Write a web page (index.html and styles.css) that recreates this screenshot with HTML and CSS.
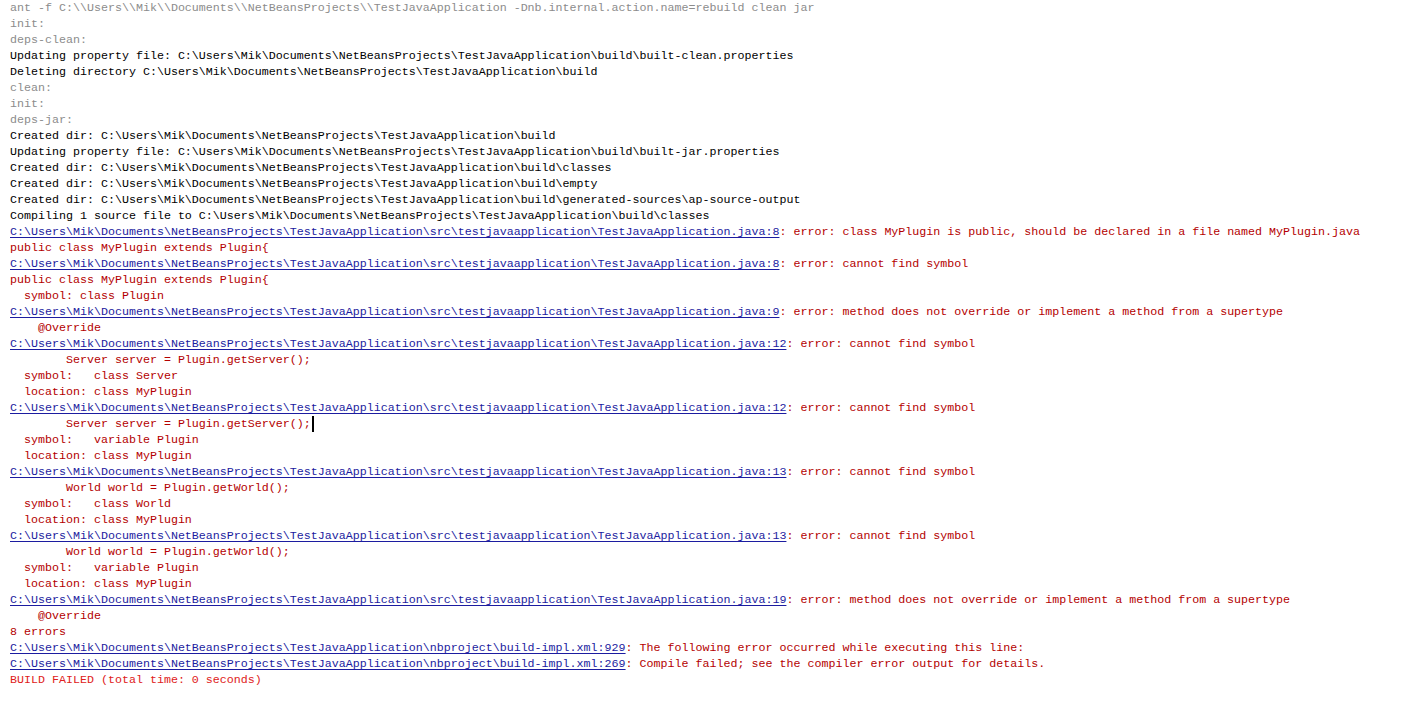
FILE: index.html
```html
<!DOCTYPE html>
<html lang="en">
	<head>
		<meta charset="utf-8" />
		<title>Output - TestJavaApplication (clean,jar)</title>
		<link rel="stylesheet" href="styles.css">
	</head>
	<body>
		<div id="output">
<div class="line info">ant -f C:\\Users\\Mik\\Documents\\NetBeansProjects\\TestJavaApplication -Dnb.internal.action.name=rebuild clean jar</div>
<div class="line info">init:</div>
<div class="line info">deps-clean:</div>
<div class="line">Updating property file: C:\Users\Mik\Documents\NetBeansProjects\TestJavaApplication\build\built-clean.properties</div>
<div class="line">Deleting directory C:\Users\Mik\Documents\NetBeansProjects\TestJavaApplication\build</div>
<div class="line info">clean:</div>
<div class="line info">init:</div>
<div class="line info">deps-jar:</div>
<div class="line">Created dir: C:\Users\Mik\Documents\NetBeansProjects\TestJavaApplication\build</div>
<div class="line">Updating property file: C:\Users\Mik\Documents\NetBeansProjects\TestJavaApplication\build\built-jar.properties</div>
<div class="line">Created dir: C:\Users\Mik\Documents\NetBeansProjects\TestJavaApplication\build\classes</div>
<div class="line">Created dir: C:\Users\Mik\Documents\NetBeansProjects\TestJavaApplication\build\empty</div>
<div class="line">Created dir: C:\Users\Mik\Documents\NetBeansProjects\TestJavaApplication\build\generated-sources\ap-source-output</div>
<div class="line">Compiling 1 source file to C:\Users\Mik\Documents\NetBeansProjects\TestJavaApplication\build\classes</div>
<div class="line err"><a href="#">C:\Users\Mik\Documents\NetBeansProjects\TestJavaApplication\src\testjavaapplication\TestJavaApplication.java:8</a>: error: class MyPlugin is public, should be declared in a file named MyPlugin.java</div>
<div class="line err">public class MyPlugin extends Plugin{</div>
<div class="line err"><a href="#">C:\Users\Mik\Documents\NetBeansProjects\TestJavaApplication\src\testjavaapplication\TestJavaApplication.java:8</a>: error: cannot find symbol</div>
<div class="line err">public class MyPlugin extends Plugin{</div>
<div class="line err">  symbol: class Plugin</div>
<div class="line err"><a href="#">C:\Users\Mik\Documents\NetBeansProjects\TestJavaApplication\src\testjavaapplication\TestJavaApplication.java:9</a>: error: method does not override or implement a method from a supertype</div>
<div class="line err">    @Override</div>
<div class="line err"><a href="#">C:\Users\Mik\Documents\NetBeansProjects\TestJavaApplication\src\testjavaapplication\TestJavaApplication.java:12</a>: error: cannot find symbol</div>
<div class="line err">        Server server = Plugin.getServer();</div>
<div class="line err">  symbol:   class Server</div>
<div class="line err">  location: class MyPlugin</div>
<div class="line err"><a href="#">C:\Users\Mik\Documents\NetBeansProjects\TestJavaApplication\src\testjavaapplication\TestJavaApplication.java:12</a>: error: cannot find symbol</div>
<div class="line err">        Server server = Plugin.getServer();<span class="caret"></span></div>
<div class="line err">  symbol:   variable Plugin</div>
<div class="line err">  location: class MyPlugin</div>
<div class="line err"><a href="#">C:\Users\Mik\Documents\NetBeansProjects\TestJavaApplication\src\testjavaapplication\TestJavaApplication.java:13</a>: error: cannot find symbol</div>
<div class="line err">        World world = Plugin.getWorld();</div>
<div class="line err">  symbol:   class World</div>
<div class="line err">  location: class MyPlugin</div>
<div class="line err"><a href="#">C:\Users\Mik\Documents\NetBeansProjects\TestJavaApplication\src\testjavaapplication\TestJavaApplication.java:13</a>: error: cannot find symbol</div>
<div class="line err">        World world = Plugin.getWorld();</div>
<div class="line err">  symbol:   variable Plugin</div>
<div class="line err">  location: class MyPlugin</div>
<div class="line err"><a href="#">C:\Users\Mik\Documents\NetBeansProjects\TestJavaApplication\src\testjavaapplication\TestJavaApplication.java:19</a>: error: method does not override or implement a method from a supertype</div>
<div class="line err">    @Override</div>
<div class="line err">8 errors</div>
<div class="line err"><a href="#">C:\Users\Mik\Documents\NetBeansProjects\TestJavaApplication\nbproject\build-impl.xml:929</a>: The following error occurred while executing this line:</div>
<div class="line err"><a href="#">C:\Users\Mik\Documents\NetBeansProjects\TestJavaApplication\nbproject\build-impl.xml:269</a>: Compile failed; see the compiler error output for details.</div>
<div class="line failed">BUILD FAILED (total time: 0 seconds)</div>
		</div>
	</body>
</html>
```

FILE: styles.css
```css
body {
	margin: 0;
	background-color: #fff;
}
#output {
	padding: 0 10px;
	font-family: "Liberation Mono", "Courier New", monospace;
	font-size: 11.67px;
	color: #000;
}
.line {
	height: 16px;
	line-height: 16px;
	white-space: pre;
}
.info {
	color: #8c8c8c;
}
.err {
	color: #b40000;
}
.err a {
	color: #1c1ca0;
	text-decoration: underline;
	text-underline-offset: 2px;
}
.failed {
	color: #e02020;
}
.caret {
	display: inline-block;
	width: 2px;
	height: 16px;
	margin-left: 1px;
	vertical-align: top;
	background-color: #000;
}
```
